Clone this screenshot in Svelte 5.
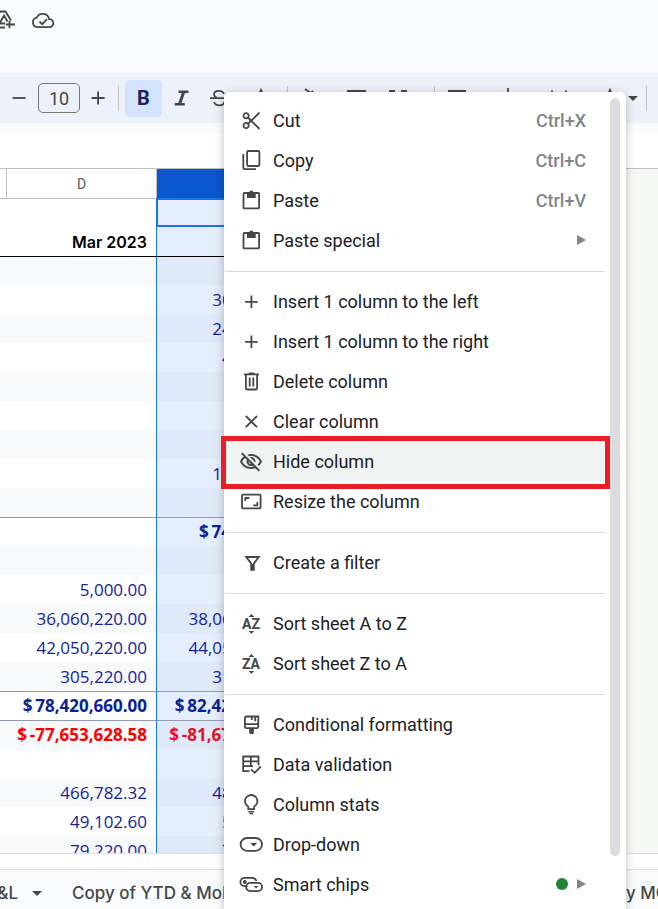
<script lang="ts">
    type Icon = { line?: string; fill?: string; letters?: string };

    // All icons are drawn on a 24x24 grid: "line" is stroked, "fill" is solid.
    const icons: Record<string, Icon> = {
        cut: {
            line: "M9.7 7.7a2.6 2.6 0 1 1-5.2 0a2.6 2.6 0 1 1 5.2 0zM9.7 17.500a2.6 2.6 0 1 1-5.2 0a2.6 2.6 0 1 1 5.2 0zM9 9.5L20.5 21M9 15.8L20.5 4.5",
            fill: "M12.8 12.7a1.3 1.3 0 1 1-2.6 0a1.3 1.3 0 1 1 2.6 0z",
        },
        copy: { line: "M9.3 3h9.9a1.2 1.2 0 0 1 1.2 1.2v12.6a1.2 1.2 0 0 1-1.2 1.2H9.3a1.2 1.2 0 0 1-1.2-1.2V4.2A1.2 1.2 0 0 1 9.3 3zM4.3 6v13.8a1.3 1.3 0 0 0 1.3 1.3H17" },
        paste: {
            line: "M5.5 5h13.6a1 1 0 0 1 1 1v13.4a1 1 0 0 1-1 1H5.5a1 1 0 0 1-1-1V6a1 1 0 0 1 1-1z",
            fill: "M8 4.5h2.3a2 2 0 0 1 4 0h2.4V10H8z",
        },
        plus: { line: "M12.4 6.5v12.6M6.1 12.8h12.6" },
        trash: {
            line: "M5 5.4h15M6.9 5.5v13.7a1.3 1.3 0 0 0 1.3 1.3h8.6a1.3 1.3 0 0 0 1.3-1.3V5.5M10.7 8.5v9M14.3 8.5v9",
            fill: "M9.8 3.5h5.4V5H9.8z",
        },
        clear: { line: "M6.8 7l11.2 11.2M18 7L6.8 18.2" },
        hide: {
            fill: "M12 7c3.79 0 7.17 2.13 8.82 5.5-.59 1.22-1.42 2.27-2.41 3.12l1.41 1.41c1.39-1.23 2.49-2.77 3.18-4.53C21.27 8.11 17 5 12 5c-1.27 0-2.49.2-3.64.57l1.65 1.65C10.66 7.09 11.32 7 12 7zm-1.07 1.14L13 10.21c.57.25 1.03.71 1.28 1.28l2.07 2.07c.08-.34.14-.7.14-1.07C16.5 10.01 14.48 8 12 8c-.37 0-.72.05-1.07.14zM2.01 4.87l2.68 2.68C3.06 8.83 1.77 10.53 1 12.5 2.73 16.89 7 20 12 20c1.52 0 2.98-.29 4.32-.82l3.42 3.42 1.41-1.41L3.42 3.45 2.01 4.87zm7.5 7.5l2.61 2.61c-.04.01-.08.02-.12.02-1.38 0-2.5-1.12-2.5-2.5 0-.05.01-.08.01-.13zm-3.4-3.4l1.75 1.75c-.23.55-.36 1.15-.36 1.78 0 2.48 2.02 4.5 4.5 4.5.63 0 1.23-.13 1.77-.36l.98.98c-.88.24-1.8.38-2.75.38-3.79 0-7.17-2.13-8.82-5.5.7-1.43 1.72-2.61 2.93-3.53z",
        },
        resize: { line: "M4 5.7h16.6a1 1 0 0 1 1 1v11.6a1 1 0 0 1-1 1H4a1 1 0 0 1-1-1V6.7a1 1 0 0 1 1-1zM6.3 12V9h4M18.3 13v3.3h-4" },
        filter: { line: "M7.2 7h12.6l-5 6.6v6.2h-2.6v-6.2zM13.5 14v5.8" },
        sortAz: { letters: "AZ", fill: "M9.5 6L12.4 3l2.9 3zM9.5 20l2.9 2.8 2.9-2.8z" },
        sortZa: { letters: "ZA", fill: "M9.5 6L12.4 3l2.9 3zM9.5 20l2.9 2.8 2.9-2.8z" },
        brush: {
            line: "M7.5 4.5h11.8v10.3a1.4 1.4 0 0 1-1.4 1.4H7.3a1.4 1.4 0 0 1-1.4-1.4V6a1.5 1.5 0 0 1 1.6-1.5zM12.8 4.5V8M16.2 4.5v4.8",
            fill: "M6 11.3h13.3v1.8H6zM10.2 16h4.7v4.7a1.3 1.3 0 0 1-1.3 1.3h-2.1a1.3 1.3 0 0 1-1.3-1.3z",
        },
        validation: { line: "M10.5 19.2H4.2V4.5h15.3v8.7M4.2 9.3h15.3M4.2 14.2h9.6M11.8 4.5v9.7M12 17.3l3.6 3.5 6.2-6.3" },
        bulb: {
            line: "M9.3 17.2v-2.5a6.2 6.2 0 1 1 5.8 0v2.5z",
            fill: "M9.4 19h5.7v1.6H9.4zM10.4 21h3.7v1.3h-3.7z",
        },
        dropdown: { line: "M8 6h8.6a6.4 6.4 0 0 1 0 12.8H8A6.4 6.4 0 0 1 8 6z", fill: "M11.3 11h6.8l-3.4 3.5z" },
        chips: {
            line: "M8.5 14.2H5.6a4.2 4.2 0 0 1 0-8.4h8a4.2 4.2 0 0 1 3.8 3.2M11.3 10.8h7.6a4.2 4.2 0 0 1 0 8.4h-7.6a4.2 4.2 0 0 1 0-8.4z",
            fill: "M7.8 10a2 2 0 1 1-4 0a2 2 0 1 1 4 0zM14.8 14h4.6l-2.3 2.4z",
        },
        minus: { line: "M5.5 12h13.2" },
        add: { line: "M12.1 5.5v13M5.6 12h13" },
        italic: { fill: "M9.500 4.500h10v2.600h-3.500l-3.500 9.800h3.300v2.600h-10v-2.600h3.500l3.500-9.800H9.500z" },
        strike: { line: "M3 12.2h18M17 7.8c-.8-2-2.6-3-5-3-3 0-5 1.5-5 3.5 0 1.500 1 2.500 2.500 3M7 16c.8 2.200 2.700 3.300 5.200 3.300 3 0 5-1.500 5-3.500" },
        color: { line: "M7 15l5-11 5 11M9 11.5h6M4 20h16" },
        paint: { line: "M5 3l13 9-7 7-6-6 8-8" },
        borders: { line: "M4 5h17v15H4zM4 12.5h17M12.5 5v15" },
        merge: { line: "M4 9V5h5M15 5h5v4M4 15v5h5M15 20h5v-5M4 12.5h5M15 12.5h5" },
        align: { line: "M3 5h18M3 10h12M3 15h18M3 20h12" },
        valign: { line: "M12 2v8M8 7l4 4 4-4M4 13h16" },
        wrap: { line: "M5 4.500v16M19 4.500v16M8 12h8" },
        rotate: { line: "M6 19L12 4l6 15" },
    };

    type Item = {
        label: string;
        icon: string;
        keys?: string;
        submenu?: boolean;
        marked?: boolean;
        isNew?: boolean;
    };

    const groups: Item[][] = [
        [
            { label: "Cut", icon: "cut", keys: "Ctrl+X" },
            { label: "Copy", icon: "copy", keys: "Ctrl+C" },
            { label: "Paste", icon: "paste", keys: "Ctrl+V" },
            { label: "Paste special", icon: "paste", submenu: true },
        ],
        [
            { label: "Insert 1 column to the left", icon: "plus" },
            { label: "Insert 1 column to the right", icon: "plus" },
            { label: "Delete column", icon: "trash" },
            { label: "Clear column", icon: "clear" },
            { label: "Hide column", icon: "hide", marked: true },
            { label: "Resize the column", icon: "resize" },
        ],
        [{ label: "Create a filter", icon: "filter" }],
        [
            { label: "Sort sheet A to Z", icon: "sortAz" },
            { label: "Sort sheet Z to A", icon: "sortZa" },
        ],
        [
            { label: "Conditional formatting", icon: "brush" },
            { label: "Data validation", icon: "validation" },
            { label: "Column stats", icon: "bulb" },
            { label: "Drop-down", icon: "dropdown" },
            { label: "Smart chips", icon: "chips", submenu: true, isNew: true },
        ],
    ];

    // \u2009 keeps the currency sign close to the amount
    const rows = [
        { d: "", e: "", kind: "active" },
        { d: "Mar 2023", e: "", kind: "title" },
        { d: "", e: "", kind: "first" },
        { d: "", e: "305,220.00" },
        { d: "", e: "245,120.00" },
        { d: "", e: "49,102.60" },
        { d: "", e: "" },
        { d: "", e: "" },
        { d: "", e: "" },
        { d: "", e: "142,220.00" },
        { d: "", e: "" },
        { d: "", e: "$\u2009741,662.60", kind: "total" },
        { d: "", e: "" },
        { d: "5,000.00", e: "" },
        { d: "36,060,220.00", e: "38,060,220.00" },
        { d: "42,050,220.00", e: "44,050,220.00" },
        { d: "305,220.00", e: "315,220.00" },
        { d: "$\u200978,420,660.00", e: "$\u200982,425,440.00", kind: "total" },
        { d: "$\u2009-77,653,628.58", e: "$\u2009-81,673,777.40", kind: "total loss" },
        { d: "", e: "" },
        { d: "466,782.32", e: "483,782.32" },
        { d: "49,102.60", e: "59,102.60" },
        { d: "79,220.00", e: "79,220.00" },
    ];
</script>

{#snippet glyph(name: string)}
    {@const icon = icons[name]}
    <svg class="icon" viewBox="0 0 24 24" aria-hidden="true">
        {#if icon.line}<path class="line" d={icon.line} />{/if}
        {#if icon.fill}<path d={icon.fill} />{/if}
        {#if icon.letters}<text x="12" y="18" text-anchor="middle">{icon.letters}</text>{/if}
    </svg>
{/snippet}

{#snippet tool(name: string, label: string, size: string)}
    <button class="tool {size}" aria-label={label}>{@render glyph(name)}</button>
{/snippet}

<div class="app">
    <header>
        <button class="drive" aria-label="Add shortcut to Drive">
            <svg width="24" height="24" viewBox="0 0 24 24" aria-hidden="true">
                <path class="line" d="M3 11l4-7.5h5.5l5.5 9M3 19.5h9M6.5 15.5l4.5-8 3.5 6M7 15.5h5M16.5 12.8v7.4M12.8 16.5H22" />
            </svg>
        </button>
        <button class="saved" aria-label="Saved to Drive">
            <svg width="24" height="24" viewBox="0 0 24 24" aria-hidden="true">
                <path class="line" d="M6.5 19.2a4.8 4.8 0 0 1-.7-9.5 6.5 6.5 0 0 1 12.3 1.5 4 4 0 0 1 .4 8zM8.5 13.5l2.7 2.7 4.8-5" />
            </svg>
        </button>
    </header>

    <div class="toolbar" role="toolbar" aria-label="Formatting">
        {@render tool("minus", "Decrease font size", "normal")}
        <input class="size" aria-label="Font size" value="10" />
        {@render tool("add", "Increase font size", "slim")}
        <span class="rule"></span>
        <button class="bold" aria-label="Bold" aria-pressed="true">B</button>
        {@render tool("italic", "Italic", "normal")}
        {@render tool("strike", "Strikethrough", "normal")}
        {@render tool("color", "Text colour", "wide")}
        <span class="rule"></span>
        {@render tool("paint", "Fill colour", "medium")}
        {@render tool("borders", "Borders", "wide")}
        {@render tool("merge", "Merge cells", "normal")}
        <span class="space"></span>
        <span class="rule"></span>
        {@render tool("align", "Horizontal align", "normal")}
        {@render tool("valign", "Vertical align", "extra")}
        {@render tool("wrap", "Text wrapping", "normal")}
        <span class="space"></span>
        {@render tool("rotate", "Text rotation", "slim")}
        <button class="more" aria-label="Text rotation options"><span class="caret"></span></button>
        <span class="rule"></span>
    </div>

    <div class="formula"></div>

    <main>
        <table>
            <colgroup>
                <col class="edge" />
                <col class="col" />
                <col class="col picked-col" />
                <col />
            </colgroup>
            <thead>
                <tr>
                    <th></th>
                    <th>D</th>
                    <th class="picked"></th>
                    <th></th>
                </tr>
            </thead>
            <tbody>
                {#each rows as row, i}
                    <tr class={row.kind} class:band={i > 1 && i % 2 === 0}>
                        <td></td>
                        <td>{row.d}</td>
                        <td class="picked">{row.e}</td>
                        <td></td>
                    </tr>
                {/each}
            </tbody>
        </table>
        <div class="beyond"></div>
    </main>

    <footer>
        <button class="tab current">P&amp;L <span class="caret"></span></button>
        <button class="tab">Copy of YTD &amp; MoM</button>
        <button class="tab last">y MOM</button>
    </footer>

    <div class="menu">
        <div class="items" role="menu" aria-label="Column actions">
            {#each groups as group, i}
                {#if i > 0}<hr />{/if}
                {#each group as item}
                    <button class="item" class:marked={item.marked} role="menuitem">
                        {@render glyph(item.icon)}
                        <span class="label">{item.label}</span>
                        {#if item.keys}<kbd>{item.keys}</kbd>{/if}
                        {#if item.isNew}<span class="dot"></span>{/if}
                        {#if item.submenu}<span class="arrow"></span>{/if}
                    </button>
                {/each}
            {/each}
        </div>
        <div class="thumb"></div>
    </div>
</div>

<style>
    :global(body) {
        margin: 0;
    }

    .app {
        position: relative;
        display: flex;
        flex-direction: column;
        height: 100vh;
        overflow: hidden;
        background: #f9fbfd;
        color: #444746;
        font-family: Roboto, "Liberation Sans", sans-serif;
    }

    button {
        border: 0;
        padding: 0;
        background: none;
        color: inherit;
        font: inherit;
    }

    svg {
        display: block;
        flex: none;
        fill: #444746;
    }

    .icon {
        width: 24px;
        height: 24px;
    }

    .icon text {
        font-size: 14px;
        font-weight: 700;
    }

    .line {
        fill: none;
        stroke: #444746;
        stroke-width: 1.8;
    }

    header {
        display: flex;
        align-items: flex-start;
        gap: 14px;
        height: 65px;
        padding-top: 8px;
    }

    .drive {
        width: 17px;
        display: flex;
        justify-content: flex-end;
    }

    .toolbar {
        display: flex;
        align-items: center;
        height: 50px;
        background: #edf2fa;
    }

    .tool,
    .more {
        display: flex;
        flex: none;
        align-items: center;
        justify-content: center;
        width: 38px;
        height: 36px;
    }

    .slim {
        width: 35px;
    }

    .medium {
        width: 42px;
    }

    .wide {
        width: 46px;
    }

    .extra {
        width: 64px;
    }

    .size {
        box-sizing: border-box;
        flex: none;
        width: 42px;
        height: 30px;
        padding: 0;
        border: 1px solid #747775;
        border-radius: 5px;
        background: transparent;
        color: #444746;
        font-family: inherit;
        font-size: 18px;
        text-align: center;
    }

    .rule {
        flex: none;
        width: 1px;
        height: 25px;
        margin: 0 3px;
        background: #c0c4cb;
    }

    .bold {
        flex: none;
        width: 37px;
        height: 37px;
        margin-left: 3px;
        border-radius: 5px;
        background: #d3e3fd;
        color: #1b2360;
        font-size: 20px;
        font-weight: 700;
    }

    .space {
        flex: none;
        width: 14px;
    }

    .more {
        width: 12px;
        margin-right: 4px;
    }

    .caret {
        border: 5px solid transparent;
        border-top-color: #444746;
        border-bottom: 0;
    }

    .formula {
        height: 35px;
        margin-top: 10px;
        background: #ffffff;
    }

    main {
        display: flex;
        flex: 1;
        min-height: 0;
        overflow: hidden;
        background: #ffffff;
    }

    table {
        flex: 1;
        table-layout: fixed;
        width: 100%;
        border-spacing: 0;
        font-family: "Open Sans", "Noto Sans", sans-serif;
        font-size: 17px;
        line-height: 28px;
        color: #13239b;
    }

    .edge {
        width: 6px;
    }

    .col {
        width: 150px;
    }

    .picked-col {
        width: 152px;
    }

    th {
        box-sizing: border-box;
        height: 30px;
        padding: 0;
        border-top: 1px solid #c0c0c0;
        border-left: 1px solid #c0c0c0;
        color: #575b5f;
        font-family: Roboto, sans-serif;
        font-size: 14px;
        font-weight: 400;
    }

    th:first-child,
    td:first-child {
        border-left: 0;
    }

    th.picked {
        background: #0b57d0;
    }

    td {
        box-sizing: border-box;
        height: 29px;
        padding: 0 9px 0 0;
        text-align: right;
        white-space: nowrap;
    }

    .band td {
        background: #f8f9fb;
    }

    td.picked {
        border-left: 1px solid #1a73e8;
        background: #e5eefd;
    }

    .band td.picked {
        background: #e0e9f8;
    }

    .active td {
        border-top: 1px solid #c0c0c0;
    }

    .active td.picked {
        border: 2px solid #1a73e8;
    }

    .title td {
        color: #000000;
        font-family: Inter, sans-serif;
        font-size: 16px;
        font-weight: 600;
    }

    .first td {
        border-top: 1px solid #000000;
    }

    .total td {
        border-top: 1px solid #8f9bad;
        color: #0b2195;
        font-weight: 700;
    }

    .loss td {
        color: #ff0000;
    }

    .loss td.picked {
        color: #e81123;
    }

    .beyond {
        flex: none;
        width: 32px;
        border-top: 1px solid #c0c0c0;
        background: #f7f9f6;
    }

    footer {
        display: flex;
        box-sizing: border-box;
        height: 56px;
        border-top: 1px solid #dfe1e3;
        background: linear-gradient(#ffffff 15px, #dfe1e3 15px, #dfe1e3 16px, #f9fbfd 16px);
        padding-top: 16px;
    }

    .tab {
        display: flex;
        flex: 1;
        align-items: center;
        height: 46px;
        overflow: hidden;
        font-family: Inter, sans-serif;
        font-size: 17px;
        font-weight: 500;
        white-space: nowrap;
    }

    .current {
        flex: none;
        justify-content: flex-end;
        gap: 14px;
        width: 42px;
        margin-right: 30px;
    }

    .last {
        flex: none;
        width: 32px;
    }

    .menu {
        position: absolute;
        top: 92px;
        right: 32px;
        bottom: 0;
        left: 224px;
        display: flex;
        border-radius: 6px 6px 0 0;
        background: #ffffff;
        box-shadow: 0 2px 10px rgba(0, 0, 0, 0.25);
    }

    .items {
        flex: 1;
        margin: 8px 5px 0 1px;
    }

    .item {
        position: relative;
        display: flex;
        align-items: center;
        width: 100%;
        height: 40px;
        padding: 0 19px 0 14px;
        color: #202124;
        font-size: 18px;
        text-align: left;
    }

    .label {
        flex: 1;
        margin-left: 10px;
    }

    kbd {
        color: #80868b;
        font-family: inherit;
        font-weight: 500;
    }

    .arrow {
        border: 5px solid transparent;
        border-left: 9px solid #808387;
        border-right: 0;
    }

    .dot {
        width: 12px;
        height: 12px;
        margin-right: 9px;
        border-radius: 50%;
        background: #1e8438;
    }

    .marked {
        background: #f1f3f3;
    }

    .marked::after {
        content: "";
        position: absolute;
        inset: -5px -5px -8px -4px;
        border: 5px solid #ee1c25;
    }

    hr {
        height: 1px;
        margin: 11px 0 9px;
        border: 0;
        background: #dadce0;
    }

    .thumb {
        width: 10px;
        height: 758px;
        margin: 6px 6px 0 0;
        border-radius: 5px;
        background: #dadce0;
    }
</style>
